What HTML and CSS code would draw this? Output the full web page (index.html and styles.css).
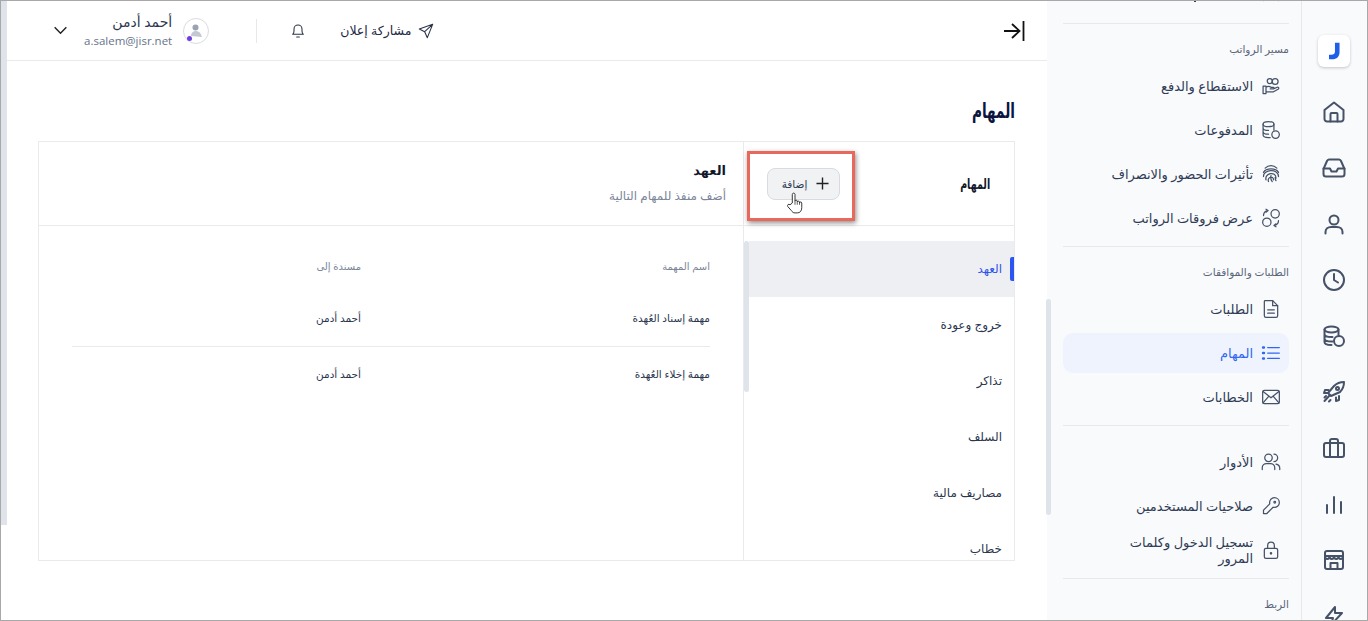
FILE: index.html
```html
<!DOCTYPE html>
<html lang="ar" dir="rtl">
<head>
    <meta charset="UTF-8">
    <title>المهام</title>
    <link rel="stylesheet" href="styles.css">
</head>
<body>
    <div class="window">
        <!-- icon rail -->
        <nav class="rail">
            <div class="logo"><svg width="11" height="18" viewBox="0 0 12 18"><path d="M6.500 0h5v10c0 5-3 8-8 8H0v-5h2.500c2.500 0 4-1 4-3.500z" fill="#1f5fe8"/></svg></div>
            <div class="rail-icons">
                <svg class="rail-icon" viewBox="0 0 24 24"><path d="M2.500 10 12 2.500 21.500 10v9a2.500 2.500 0 0 1-2.500 2.500H5A2.500 2.500 0 0 1 2.500 19z"/><path d="M8.500 21.500V14a1 1 0 0 1 1-1h5a1 1 0 0 1 1 1v7.500"/></svg>
                <svg class="rail-icon" viewBox="0 0 24 24"><path d="M1.500 13v5a2.500 2.500 0 0 0 2.500 2.500h16a2.500 2.500 0 0 0 2.500-2.500v-5L19 5a2.500 2.500 0 0 0-2-1.500H7A2.500 2.500 0 0 0 5 5z"/><path d="M1.500 12.500H8l1.500 3h5l1.500-3h6.500"/></svg>
                <svg class="rail-icon" viewBox="0 0 24 24"><circle cx="12" cy="8" r="4.500"/><path d="M3.500 21.500V20c0-3 2.500-5 5.500-5h6c3 0 5.500 2 5.500 5v1.500"/></svg>
                <svg class="rail-icon" viewBox="0 0 24 24"><circle cx="12" cy="12" r="10"/><path d="M12 6v6l4 2.500"/></svg>
                <svg class="rail-icon" viewBox="0 0 24 24"><ellipse cx="9.500" cy="5.500" rx="7" ry="3"/><path d="M2.500 5.500V18c0 1.700 3 3 7 3M2.500 10c0 1.700 3 3 7 3h1M2.500 14.500c0 1.700 3 3 7 3h1M16.500 5.500V11"/><circle cx="17" cy="17" r="5"/></svg>
                <svg class="rail-icon" viewBox="0 0 24 24"><path d="M9 16l-3-3 6-7c3-3 6-4 10-4 0 4-1 7-4 10z"/><path d="M6.500 10H3l-1 3 4 0M14 17.500V21l3-1 0-4M7.500 15.500 2.500 21M4 16l-1.500 1.500M8.500 20 7 21.500"/><circle cx="15.500" cy="8.500" r="1.500"/></svg>
                <svg class="rail-icon" viewBox="0 0 24 24"><rect x="2" y="7" width="20" height="14" rx="2"/><path d="M8 21V5a2 2 0 0 1 2-2h4a2 2 0 0 1 2 2v16"/></svg>
                <svg class="rail-icon" viewBox="0 0 24 24"><path d="M5 21v-8M12 21V5M19 21v-11"/></svg>
                <svg class="rail-icon" viewBox="0 0 24 24"><rect x="3" y="3" width="18" height="18" rx="2"/><path d="M3 8h18M3 8c0 4 4.500 4 4.500 0 0 4 4.500 4 4.500 0 0 4 4.500 4 4.500 0 0 4 4.500 4 4.500 0M8.500 21v-6h7v6"/></svg>
                <svg class="rail-icon" viewBox="0 0 24 24"><path d="M13 3 4 14h7l-2 7 11-12h-7z"/></svg>
            </div>
        </nav>

        <!-- settings menu -->
        <aside class="side">
            <div class="side-scroll">
                <div class="side-cut"><svg class="side-icon" viewBox="0 0 24 24"><path d="M3 3l18 18M21 3 3 21M8 16l-4 4M16 16l4 4"/></svg><i class="cut-dot"></i></div>

                <section class="side-group">
                    <div class="side-label">مسير الرواتب</div>
                    <a class="side-item"><svg class="side-icon" viewBox="0 0 24 24"><path d="M2.500 12h3.500v9H2.500zM6 19h9l6-3.500c.8-1-.2-2.500-1.500-2l-4.500 2h-4M6 13.500c2-1.500 4-1.500 6 0h2.500c1.500 0 1.500 2 0 2H11"/><circle cx="10.500" cy="6" r="3"/><circle cx="17" cy="6.500" r="3.500"/></svg><span>الاستقطاع والدفع</span></a>
                    <a class="side-item"><svg class="side-icon" viewBox="0 0 24 24"><ellipse cx="9" cy="5" rx="6.500" ry="3"/><path d="M2.500 5v13c0 1.700 3 3 6.500 3h2M2.500 9.500c0 1.700 3 3 6.500 3M2.500 14c0 1.700 3 3 6.500 3M15.500 5v7"/><circle cx="17.500" cy="17.500" r="4.500"/></svg><span>المدفوعات</span></a>
                    <a class="side-item"><svg class="side-icon" viewBox="0 0 24 24"><path d="M5 5c4-4 10-4 14 0M3 10c3-5.500 15-5.500 18 0M3 15c-.5-9 18-10 18 0M6 19c-2-8 12-11 12-2M9 21c-2-5 6-8 6-2M12 14c-1 3 0 5 1.500 7M18 20c-1-1-1-3-1-4"/></svg><span>تأثيرات الحضور والانصراف</span></a>
                    <a class="side-item"><svg class="side-icon" viewBox="0 0 24 24"><circle cx="7" cy="17" r="5"/><circle cx="17" cy="7" r="5"/><path d="M3 9c0-3 2-6 5-6M6 1.500 8.500 3 6 5M21 15c0 3-2 6-5 6M18 22.500 15.500 21l2.500-2"/></svg><span>عرض فروقات الرواتب</span></a>
                </section>

                <section class="side-group">
                    <div class="side-label">الطلبات والموافقات</div>
                    <a class="side-item"><svg class="side-icon" viewBox="0 0 24 24"><path d="M5 2h9l6 6v12a2 2 0 0 1-2 2H6a2 2 0 0 1-2-2V3a1 1 0 0 1 1-1z"/><path d="M14 2v6h6M8 13h8M8 17h8"/></svg><span>الطلبات</span></a>
                    <a class="side-item active"><svg class="side-icon" viewBox="0 0 24 24"><path d="M8 5.500h14M8 12h14M8 18.500h14"/><path d="M2.500 5.500h1M2.500 12h1M2.500 18.500h1" stroke-width="3"/></svg><span>المهام</span></a>
                    <a class="side-item"><svg class="side-icon" viewBox="0 0 24 24"><rect x="2" y="4" width="20" height="16" rx="2"/><path d="M2.500 5.500 12 13l9.500-7.500M2.500 19l7-8M21.500 19l-7-8"/></svg><span>الخطابات</span></a>
                </section>

                <section class="side-group no-label">
                    <a class="side-item"><svg class="side-icon" viewBox="0 0 24 24"><circle cx="9" cy="7" r="4.500"/><path d="M1.500 21v-2c0-3 2.500-5 5-5h5c2.500 0 5 2 5 5v2M15.500 2.500a4.500 4.500 0 0 1 0 9M18 14.500c2.500.5 4.500 2.500 4.500 5V21"/></svg><span>الأدوار</span></a>
                    <a class="side-item"><svg class="side-icon" viewBox="0 0 24 24"><path d="M3 21v-4l7.500-7.500C9.500 5 13 2 16 2c3.500 0 6 2.500 6 6 0 3-3 6.500-7.500 5.500L7 21z"/><circle cx="16.500" cy="7.500" r="1"/></svg><span>صلاحيات المستخدمين</span></a>
                    <a class="side-item two-line"><svg class="side-icon" viewBox="0 0 24 24"><rect x="4" y="10" width="16" height="12" rx="2"/><path d="M8 10V6.500a4 4 0 0 1 8 0V10"/><circle cx="12" cy="16" r=".8"/></svg><span>تسجيل الدخول وكلمات المرور</span></a>
                </section>

                <section class="side-group">
                    <div class="side-label">الربط</div>
                </section>
            </div>
            <div class="side-thumb"></div>
        </aside>

        <!-- page -->
        <main class="page">
            <header class="topbar">
                <svg class="collapse-icon" viewBox="0 0 22 22"><path d="M20.500 1v20M1 11h15M9 4l7.500 7L9 18"/></svg>
                <div class="top-actions">
                    <a class="share">
                        <svg class="top-icon" viewBox="0 0 24 24"><path d="M22 2 2 9l8 4 4 9zM22 2 10 13"/></svg>
                        <span>مشاركة إعلان</span>
                    </a>
                    <svg class="top-icon bell" viewBox="0 0 24 24"><path d="M4 17c1.500-1.500 2-3 2-5V9a6 6 0 0 1 12 0v3c0 2 .5 3.500 2 5z"/><path d="M10 21h4"/></svg>
                    <div class="top-sep"></div>
                    <div class="user">
                        <div class="avatar">
                            <svg width="16" height="16" viewBox="0 0 16 16"><circle cx="7.500" cy="4.500" r="3" fill="#9aa3b2"/><path d="M3 13c0-4 3-5 5-5 3 0 5 2 6 6z" fill="#c3c8d2"/></svg>
                            <i class="avatar-dot"></i>
                        </div>
                        <div class="user-text">
                            <div class="user-name">أحمد أدمن</div>
                            <div class="user-mail">a.salem@jisr.net</div>
                        </div>
                    </div>
                    <svg class="chevron" viewBox="0 0 16 10"><path d="M1.500 1.500 8 8l6.500-6.500"/></svg>
                </div>
            </header>

            <div class="content">
                <h1>المهام</h1>
                <div class="card">
                    <div class="card-tabs">
                        <div class="tabs-head">
                            <h2>المهام</h2>
                            <button class="add-btn">
                                <svg class="plus" viewBox="0 0 14 14"><path d="M7 .5v13M.5 7h13"/></svg>
                                <span>إضافة</span>
                            </button>
                        </div>
                        <div class="tabs-list">
                            <div class="tabs-thumb"></div>
                            <div class="tab active">العهد</div>
                            <div class="tab">خروج وعودة</div>
                            <div class="tab">تذاكر</div>
                            <div class="tab">السلف</div>
                            <div class="tab">مصاريف مالية</div>
                            <div class="tab">خطاب</div>
                        </div>
                    </div>
                    <div class="card-body">
                        <div class="body-head">
                            <h3>العهد</h3>
                            <p>أضف منفذ للمهام التالية</p>
                        </div>
                        <div class="table">
                            <div class="row row-head"><div>اسم المهمة</div><div>مسندة إلى</div></div>
                            <div class="row row-line"><div>مهمة إسناد العُهدة</div><div>أحمد أدمن</div></div>
                            <div class="row row-last"><div>مهمة إخلاء العُهدة</div><div>أحمد أدمن</div></div>
                        </div>
                    </div>
                </div>
            </div>
            <div class="page-thumb"></div>
        </main>

        <!-- annotation over the add button -->
        <div class="callout"></div>
        <svg class="hand" viewBox="0 0 20 26"><path d="M7 13V3.500c0-2 3-2 3 0V11c0-1.500 2.500-1.500 2.500 0v1c0-1.500 2.500-1.500 2.500 0v1c0-1.500 2.500-1.500 2.500 0v5c0 4-2 6-5 6H10c-2 0-3-1-4-2.500L2 17c-1.200-1.800 1-3.500 2.500-2z" fill="#fff" stroke="#222" stroke-width="1"/><path d="M10 11v4M12.500 12v3M15 13v2" stroke="#222" fill="none" stroke-width=".8"/></svg>
    </div>
</body>
</html>
```

FILE: styles.css
```css
* {
    box-sizing: border-box;
}

html, body {
    margin: 0;
    height: 100%;
    overflow: hidden;
}

body {
    font-family: "Noto Sans", "DejaVu Sans", sans-serif;
    color: #1d2a44;
    background-color: white;
}

.window {
    position: relative;
    display: flex;
    height: 621px;
    border: 1px solid #a8a8a8;
    overflow: hidden;
}

/* rail */
.rail {
    width: 66px;
    flex-shrink: 0;
    background-color: #f9fafc;
    border-left: 1px solid #e6e8ec;
    display: flex;
    flex-direction: column;
    align-items: center;
    padding-top: 34px;
    padding-right: 1px;
}

.logo {
    width: 32px;
    height: 32px;
    flex-shrink: 0;
    border-radius: 6px;
    background-color: white;
    box-shadow: 0 1px 3px rgba(30, 40, 70, 0.25);
    display: flex;
    align-items: center;
    justify-content: center;
}

.rail-icons {
    display: flex;
    flex-direction: column;
    align-items: center;
    gap: 32px;
    margin-top: 33px;
}

.rail-icon {
    width: 24px;
    height: 24px;
    flex-shrink: 0;
    fill: none;
    stroke: #465268;
    stroke-width: 2;
    stroke-linecap: round;
    stroke-linejoin: round;
}

/* side menu */
.side {
    position: relative;
    width: 254px;
    flex-shrink: 0;
    background-color: #f9fafc;
}

.side-scroll {
    padding: 0 12px 0 16px;
}

/* item scrolled almost out of view */
.side-cut {
    display: flex;
    align-items: center;
    height: 40px;
    margin-top: -28px;
    margin-bottom: 10px;
    padding-right: 8px;
}

.cut-dot {
    width: 2px;
    height: 2px;
    margin-right: 65px;
    margin-top: 16px;
    background-color: #2f3c55;
}

.side-group {
    border-top: 1px solid #e7e9ed;
    padding-top: 17px;
    padding-bottom: 4px;
}

.side-group.no-label {
    padding-top: 16px;
}

.side-label {
    font-size: 10.500px;
    line-height: 16px;
    color: #5b667a;
    margin-bottom: 9px;
}

.side-item {
    display: flex;
    align-items: center;
    gap: 8px;
    height: 40px;
    margin-bottom: 4px;
    padding: 0 8px;
    border-radius: 10px;
    font-size: 13px;
    line-height: 16px;
    color: #2f3c55;
}

.side-item.active {
    background-color: #eff3fd;
    color: #2f66f2;
}

.side-item.two-line span {
    max-width: 140px;
}

.side-icon {
    width: 20px;
    height: 20px;
    flex-shrink: 0;
    fill: none;
    stroke: #465268;
    stroke-width: 1.500;
    stroke-linecap: round;
    stroke-linejoin: round;
}

.side-item.active .side-icon {
    stroke: #2f66f2;
}

.side-thumb {
    position: absolute;
    left: -1px;
    top: 298px;
    width: 5px;
    height: 216px;
    border-radius: 3px;
    background-color: #dfe3ea;
}

/* page */
.page {
    position: relative;
    flex: 1;
    min-width: 0;
    padding-left: 6px;
}

.page-thumb {
    position: absolute;
    left: 0;
    top: 0;
    width: 6px;
    height: 524px;
    background-color: #dfe3ea;
}

.topbar {
    height: 60px;
    border-bottom: 1px solid #e9eaed;
    display: flex;
    align-items: center;
    justify-content: space-between;
    padding: 0 22px 0 46px;
}

.collapse-icon {
    width: 22px;
    height: 22px;
    fill: none;
    stroke: #111;
    stroke-width: 1.800;
}

.top-actions {
    display: flex;
    align-items: center;
}

.share {
    display: flex;
    align-items: center;
    gap: 7px;
    font-size: 12.500px;
}

.top-icon {
    width: 16px;
    height: 16px;
    fill: none;
    stroke: #2a3346;
    stroke-width: 1.600;
    stroke-linecap: round;
    stroke-linejoin: round;
}

.bell {
    margin: 0 34px 0 33px;
}

.top-sep {
    width: 1px;
    height: 24px;
    background-color: #e6e8ec;
    margin-left: 47px;
}

.user {
    display: flex;
    align-items: center;
    gap: 11px;
}

.avatar {
    position: relative;
    width: 26px;
    height: 26px;
    border-radius: 50%;
    border: 1px solid #d9dce2;
    display: flex;
    align-items: center;
    justify-content: center;
}

.avatar-dot {
    position: absolute;
    left: 3px;
    bottom: 2px;
    width: 5px;
    height: 5px;
    border-radius: 50%;
    background-color: #6d3fe0;
}

.user-name {
    font-size: 14px;
    line-height: 20px;
    color: #2b3750;
}

.user-mail {
    font-family: "Open Sans", sans-serif;
    font-size: 11.500px;
    line-height: 18px;
    color: #66728a;
    direction: ltr;
    text-align: right;
}

.chevron {
    width: 15px;
    height: 9px;
    margin-right: 16px;
    fill: none;
    stroke: #222;
    stroke-width: 1.600;
}

.content {
    padding: 0 32px 0 31px;
}

h1 {
    margin: 33px 0 15px 0;
    font-size: 21px;
    line-height: 32px;
    font-weight: 700;
    color: #0b1540;
    transform: scaleX(0.65);
    transform-origin: right center;
}

.card {
    display: flex;
    height: 420px;
    border: 1px solid #e9eaed;
}

.card-tabs {
    width: 271px;
    flex-shrink: 0;
    border-left: 1px solid #e9eaed;
    display: flex;
    flex-direction: column;
}

.tabs-head {
    height: 84px;
    flex-shrink: 0;
    border-bottom: 1px solid #e9eaed;
    display: flex;
    align-items: center;
    justify-content: space-between;
    padding: 0 24px 0 23px;
}

h2 {
    margin: 0;
    font-size: 14px;
    font-weight: 700;
    color: #12182b;
    transform: scaleX(0.68);
    transform-origin: right center;
}

.add-btn {
    width: 73px;
    height: 32px;
    border: 1px solid #d8dbe2;
    border-radius: 8px;
    background-color: #f1f2f4;
    display: flex;
    align-items: center;
    justify-content: center;
    gap: 9px;
    padding: 0 0 0 4px;
    font-family: inherit;
    font-size: 10.500px;
    color: #2f3c55;
}

.plus {
    width: 13px;
    height: 13px;
    fill: none;
    stroke: #222;
    stroke-width: 1.500;
}

.tabs-list {
    position: relative;
    flex: 1;
    min-height: 0;
    overflow: hidden;
    padding-top: 15px;
    padding-left: 5px;
}

.tabs-thumb {
    position: absolute;
    left: 0;
    top: 15px;
    width: 5px;
    height: 151px;
    border-radius: 3px;
    background-color: #dfe3ea;
}

.tab {
    position: relative;
    height: 56px;
    display: flex;
    align-items: center;
    padding: 0 12px 2px 12px;
    font-size: 12px;
    color: #2b3750;
}

.tab.active {
    background-color: #eeeff2;
    color: #2f55e8;
}

.tab.active::before {
    content: "";
    position: absolute;
    right: 0;
    top: 16px;
    width: 4px;
    height: 24px;
    border-radius: 2px 0 0 2px;
    background-color: #2b57f0;
}

.card-body {
    flex: 1;
    min-width: 0;
}

.body-head {
    height: 84px;
    border-bottom: 1px solid #e9eaed;
    padding: 18px 17px 0 0;
}

h3 {
    margin: 0 0 7px 0;
    font-size: 13px;
    line-height: 20px;
    font-weight: 700;
    color: #12182b;
}

.body-head p {
    margin: 0;
    font-size: 12px;
    line-height: 18px;
    color: #7c869a;
}

.table {
    padding: 14px 33px 0 33px;
}

.row {
    display: grid;
    grid-template-columns: 349px 1fr;
    height: 57px;
    align-items: center;
    font-size: 10.500px;
    color: #2b3750;
}

.row-head {
    height: 50px;
    padding-top: 2px;
    font-size: 10px;
    color: #7c869a;
}

.row-line {
    border-bottom: 1px solid #e9eaed;
}

.row-last {
    height: 54px;
}

/* annotation */
.callout {
    position: absolute;
    left: 746px;
    top: 150px;
    width: 108px;
    height: 70px;
    border: 3px solid #e8695b;
    box-shadow: 1px 2px 5px rgba(0, 0, 0, 0.45);
}

.hand {
    position: absolute;
    left: 785px;
    top: 190px;
    width: 18px;
    height: 24px;
}
```
